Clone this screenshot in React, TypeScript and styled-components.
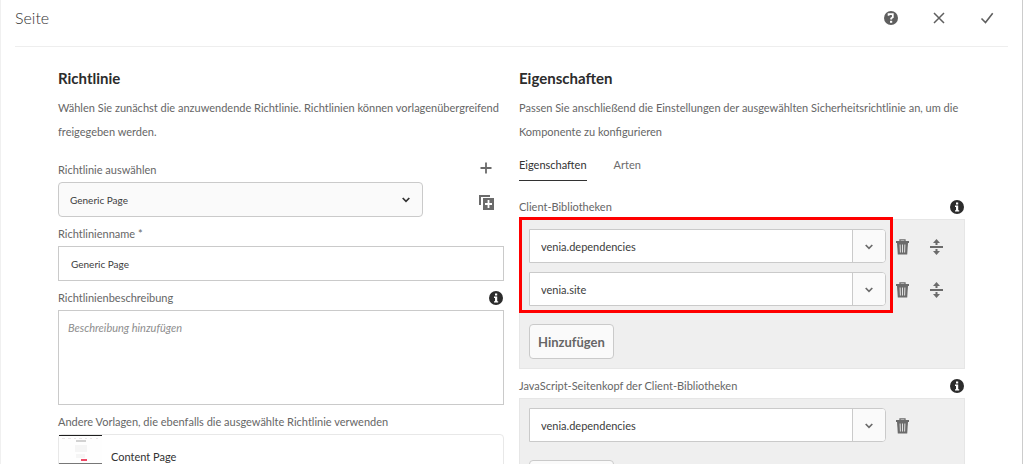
import React from "react";
import styled, { createGlobalStyle, css } from "styled-components";

const GlobalStyle = createGlobalStyle`
  *, *::before, *::after { box-sizing: border-box; }
  body {
    margin: 0;
    background: #ffffff;
    color: #666666;
    font-family: Lato, "Open Sans", sans-serif;
    font-size: 11px;
    line-height: 24px;
  }
  button, input, select, textarea { font: inherit; color: inherit; margin: 0; }
`;

const Dialog = styled.div`
  height: 100vh;
  overflow: hidden;
  border-left: 1px solid #f0f0f0;
  border-right: 1px solid #cccccc;
`;

const Header = styled.header`
  display: flex;
  align-items: center;
  justify-content: space-between;
  height: 47px;
  margin: 0 14px;
  padding-bottom: 10px;
  border-bottom: 1px solid #eeeeee;
`;

const Title = styled.h1`
  margin: 0;
  color: #323232;
  font-size: 16px;
  font-weight: 300;
`;

const HeaderActions = styled.div`
  display: flex;
  margin-right: -3px;
`;

const IconButton = styled.button<{ $w: number; $h: number }>`
  display: flex;
  align-items: center;
  justify-content: center;
  width: ${(p) => p.$w}px;
  height: ${(p) => p.$h}px;
  padding: 0;
  border: 0;
  background: none;
  color: #6b6b6b;
`;

const Body = styled.main`
  display: grid;
  grid-template-columns: 1fr 1fr;
  gap: 15px;
  padding: 19px 57px 0;
`;

const Column = styled.section`
  min-width: 0;
`;

const Heading = styled.h2`
  margin: 0 0 6px;
  color: #2c2c2c;
  font-size: 15px;
  font-weight: 700;
`;

const Intro = styled.p`
  margin: 0;
`;

const PolicyRow = styled.div`
  display: flex;
  gap: 45px;
  margin-top: 14px;
`;

const PolicyField = styled.div`
  flex: 1;
  min-width: 0;
`;

const PolicyActions = styled.div`
  display: flex;
  flex-direction: column;
  gap: 14px;
`;

const LabelRow = styled.div`
  display: flex;
  align-items: center;
  justify-content: space-between;
  margin-top: 5px;
`;

const Label = styled.label`
  display: block;
`;

const boxed = css`
  display: block;
  width: 100%;
  border: 1px solid #cacaca;
  background: #ffffff;
  color: #3c3c3c;
  outline: 0;
`;

const SelectBox = styled.div`
  display: grid;
  align-items: center;
  color: #323232;
  > * { grid-area: 1 / 1; }
  > svg { justify-self: end; margin-right: 13px; pointer-events: none; }
`;

const Select = styled.select`
  ${boxed}
  height: 35px;
  padding: 0 36px 0 11px;
  border-radius: 4px;
  background: #fafafa;
  font-size: 10px;
  appearance: none;
`;

const TextInput = styled.input`
  ${boxed}
  height: 35px;
  padding: 0 12px;
  font-size: 10px;
`;

const TextArea = styled.textarea`
  ${boxed}
  height: 95px;
  padding: 9px;
  line-height: 16px;
  resize: none;
  &::placeholder { color: #8e8e8e; font-style: italic; opacity: 1; }
`;

const TemplateList = styled.ul`
  margin: 0;
  padding: 0;
  border: 1px solid #e8e8e8;
  border-radius: 4px;
  list-style: none;
`;

const TemplateItem = styled.li`
  display: flex;
  align-items: center;
  gap: 9px;
  height: 43px;
  color: #323232;
`;

const Tabs = styled.div`
  display: flex;
  gap: 27px;
  margin: 9px 0 14px;
`;

const Tab = styled.button<{ $active?: boolean }>`
  height: 28px;
  padding: 0 0 3px;
  border: 0;
  border-bottom: 1px solid ${(p) => (p.$active ? "#323232" : "transparent")};
  background: none;
  color: ${(p) => (p.$active ? "#323232" : "#6b6b6b")};
`;

const Panel = styled.div`
  padding: 9px;
  border: 1px solid #e6e6e6;
  background: #efefef;
`;

const LibraryList = styled.div`
  position: relative;
  display: flex;
  flex-direction: column;
  gap: 9px;
  margin-bottom: 18px;
`;

const LibraryRow = styled.div`
  display: flex;
`;

const RowActions = styled.div`
  display: flex;
  width: 69px;
  padding-top: 2px;
`;

const Combo = styled.div`
  display: flex;
  flex: 1;
  min-width: 0;
  height: 34px;
  border: 1px solid #cacaca;
  border-radius: 0 4px 4px 0;
  background: #ffffff;
  overflow: hidden;
`;

const ComboInput = styled.input`
  flex: 1;
  min-width: 0;
  padding: 2px 11px 0;
  border: 0;
  background: none;
  color: #3c3c3c;
  outline: 0;
`;

const ComboToggle = styled.button`
  display: flex;
  align-items: center;
  justify-content: center;
  width: 33px;
  padding: 2px 0 0;
  border: 0;
  border-left: 1px solid #cacaca;
  background: #fafafa;
  color: #6b6b6b;
`;

const Highlight = styled.div`
  position: absolute;
  inset: -12px 62px -7px -10px;
  border: 3px solid #ff0000;
  pointer-events: none;
`;

const AddButton = styled.button`
  height: 35px;
  padding: 0 8px;
  border: 1px solid #cacaca;
  border-radius: 4px;
  background: #fafafa;
  font-size: 13px;
  font-weight: 700;
  line-height: 16px;
`;

const HelpIcon = () => (
  <svg width="14" height="14" viewBox="0 0 14 14" aria-hidden="true">
    <circle cx="7" cy="7" r="7" fill="#5f5f5f" />
    <path d="M4.6 4.8V3.2h4.2v3L7.2 7.4v1.2" fill="none" stroke="#fff" strokeWidth="1.8" />
    <rect x="6" y="9.8" width="2.2" height="2" fill="#fff" />
  </svg>
);

const CloseIcon = () => (
  <svg width="12" height="12" viewBox="0 0 12 12" aria-hidden="true">
    <path d="M1 1l10 10M11 1L1 11" stroke="#5f5f5f" strokeWidth="1.5" />
  </svg>
);

const CheckIcon = () => (
  <svg width="14" height="12" viewBox="0 0 14 12" aria-hidden="true">
    <path d="M1.5 6.5l4 4L12.7 1.3" fill="none" stroke="#5f5f5f" strokeWidth="1.6" />
  </svg>
);

const PlusIcon = () => (
  <svg width="12" height="12" viewBox="0 0 12 12" aria-hidden="true">
    <path d="M6 .5v11M.5 6h11" stroke="currentColor" strokeWidth="1.8" />
  </svg>
);

const DuplicateIcon = () => (
  <svg width="15" height="15" viewBox="0 0 15 15" aria-hidden="true">
    <path d="M0 0h11v2H2v8H0z" fill="currentColor" />
    <rect x="4" y="3" width="11" height="12" fill="currentColor" />
    <path d="M9.5 5v8M6 9h7" stroke="#fff" strokeWidth="1.8" />
  </svg>
);

const InfoIcon = () => (
  <svg width="14" height="14" viewBox="0 0 14 14" role="img" aria-label="Info">
    <circle cx="7" cy="7" r="7" fill="#2c2c2c" />
    <path d="M6 2.4h2.2v2H6zM5 5.6h3.2v4.6h1v1.4H5v-1.4h1V7H5z" fill="#fff" />
  </svg>
);

const ChevronIcon = () => (
  <svg width="8" height="6" viewBox="0 0 8 6" aria-hidden="true">
    <path d="M.7 1L4 4.3 7.3 1" fill="none" stroke="currentColor" strokeWidth="1.7" />
  </svg>
);

const TrashIcon = () => (
  <svg width="14" height="16" viewBox="0 0 14 16" aria-hidden="true">
    <path d="M4 2.4V.9h5v1.5" fill="none" stroke="currentColor" strokeWidth="1.3" />
    <path d="M0 2h13v2H0z" fill="currentColor" />
    <path d="M1 4h11l-.8 11.5H1.8z" fill="currentColor" />
    <path d="M4.1 5.5l.3 8M6.5 5.5v8M8.9 5.5l-.3 8" stroke="#efefef" strokeWidth=".9" />
  </svg>
);

const MoveIcon = () => (
  <svg width="14" height="16" viewBox="0 0 14 16" aria-hidden="true">
    <path d="M0 7h13v2H0z" fill="currentColor" />
    <path d="M6.5 0L10 4H7.5v2h-2V4H3zM6.5 16L3 12h2.5v-2h2v2H10z" fill="currentColor" />
  </svg>
);

const TemplateThumb = () => (
  <svg width="43" height="43" viewBox="0 0 43 43" aria-hidden="true">
    <rect width="43" height="43" fill="#fefefe" />
    <rect width="43" height="1" fill="#1e1e1e" />
    <path d="M3 3.5h3M9 3.5h3M15 3.5h2M20 3.5h3M26 3.5h2M31 3.5h2M37 3.5h2" stroke="#e8e4e6" />
    <rect x="17" y="5" width="10" height="2" fill="#d2d2d2" />
    <path d="M16 10h12v7H16zM17 19h9v4h-9z" fill="#f5f5f5" />
    <rect x="22" y="24" width="6" height="2" fill="#ee4a66" />
    <rect y="28" width="43" height="1" fill="#777777" />
  </svg>
);

type LibraryGroupProps = {
  id: string;
  label: string;
  values: string[];
  sortable?: boolean;
  highlighted?: boolean;
};

const LibraryGroup = ({ id, label, values, sortable, highlighted }: LibraryGroupProps) => (
  <>
    <LabelRow>
      <Label htmlFor={`${id}-0`}>{label}</Label>
      <IconButton type="button" $w={16} $h={16} aria-label="Info">
        <InfoIcon />
      </IconButton>
    </LabelRow>
    <Panel>
      <LibraryList>
        {values.map((value, i) => (
          <LibraryRow key={value}>
            <Combo>
              <ComboInput id={`${id}-${i}`} aria-label={label} defaultValue={value} />
              <ComboToggle type="button" aria-label="Liste öffnen">
                <ChevronIcon />
              </ComboToggle>
            </Combo>
            <RowActions>
              <IconButton type="button" $w={34} $h={32} aria-label="Löschen">
                <TrashIcon />
              </IconButton>
              {sortable && (
                <IconButton type="button" $w={34} $h={32} aria-label="Verschieben">
                  <MoveIcon />
                </IconButton>
              )}
            </RowActions>
          </LibraryRow>
        ))}
        {highlighted && <Highlight />}
      </LibraryList>
      <AddButton type="button">Hinzufügen</AddButton>
    </Panel>
  </>
);

export default function App() {
  return (
    <>
      <GlobalStyle />
      <Dialog>
        <Header>
          <Title>Seite</Title>
          <HeaderActions>
            <IconButton type="button" $w={48} $h={36} aria-label="Hilfe">
              <HelpIcon />
            </IconButton>
            <IconButton type="button" $w={48} $h={36} aria-label="Schließen">
              <CloseIcon />
            </IconButton>
            <IconButton type="button" $w={48} $h={36} aria-label="Fertig">
              <CheckIcon />
            </IconButton>
          </HeaderActions>
        </Header>
        <Body>
          <Column>
            <Heading>Richtlinie</Heading>
            <Intro>
              Wählen Sie zunächst die anzuwendende Richtlinie. Richtlinien können
              vorlagenübergreifend freigegeben werden.
            </Intro>
            <PolicyRow>
              <PolicyField>
                <Label htmlFor="policy">Richtlinie auswählen</Label>
                <SelectBox>
                  <Select id="policy" defaultValue="generic">
                    <option value="generic">Generic Page</option>
                  </Select>
                  <ChevronIcon />
                </SelectBox>
              </PolicyField>
              <PolicyActions>
                <IconButton type="button" $w={36} $h={20} aria-label="Neue Richtlinie">
                  <PlusIcon />
                </IconButton>
                <IconButton type="button" $w={36} $h={20} aria-label="Richtlinie duplizieren">
                  <DuplicateIcon />
                </IconButton>
              </PolicyActions>
            </PolicyRow>
            <LabelRow>
              <Label htmlFor="policy-name">Richtlinienname *</Label>
            </LabelRow>
            <TextInput id="policy-name" defaultValue="Generic Page" />
            <LabelRow>
              <Label htmlFor="policy-text">Richtlinienbeschreibung</Label>
              <IconButton type="button" $w={16} $h={16} aria-label="Info">
                <InfoIcon />
              </IconButton>
            </LabelRow>
            <TextArea id="policy-text" placeholder="Beschreibung hinzufügen" />
            <LabelRow>Andere Vorlagen, die ebenfalls die ausgewählte Richtlinie verwenden</LabelRow>
            <TemplateList>
              <TemplateItem>
                <TemplateThumb />
                <span>Content Page</span>
              </TemplateItem>
            </TemplateList>
          </Column>
          <Column>
            <Heading>Eigenschaften</Heading>
            <Intro>
              Passen Sie anschließend die Einstellungen der ausgewählten
              Sicherheitsrichtlinie an, um die Komponente zu konfigurieren
            </Intro>
            <Tabs role="tablist">
              <Tab type="button" role="tab" aria-selected="true" $active>
                Eigenschaften
              </Tab>
              <Tab type="button" role="tab" aria-selected="false">
                Arten
              </Tab>
            </Tabs>
            <LibraryGroup
              id="client"
              label="Client-Bibliotheken"
              values={["venia.dependencies", "venia.site"]}
              sortable
              highlighted
            />
            <LibraryGroup
              id="head"
              label="JavaScript-Seitenkopf der Client-Bibliotheken"
              values={["venia.dependencies"]}
            />
          </Column>
        </Body>
      </Dialog>
    </>
  );
}
